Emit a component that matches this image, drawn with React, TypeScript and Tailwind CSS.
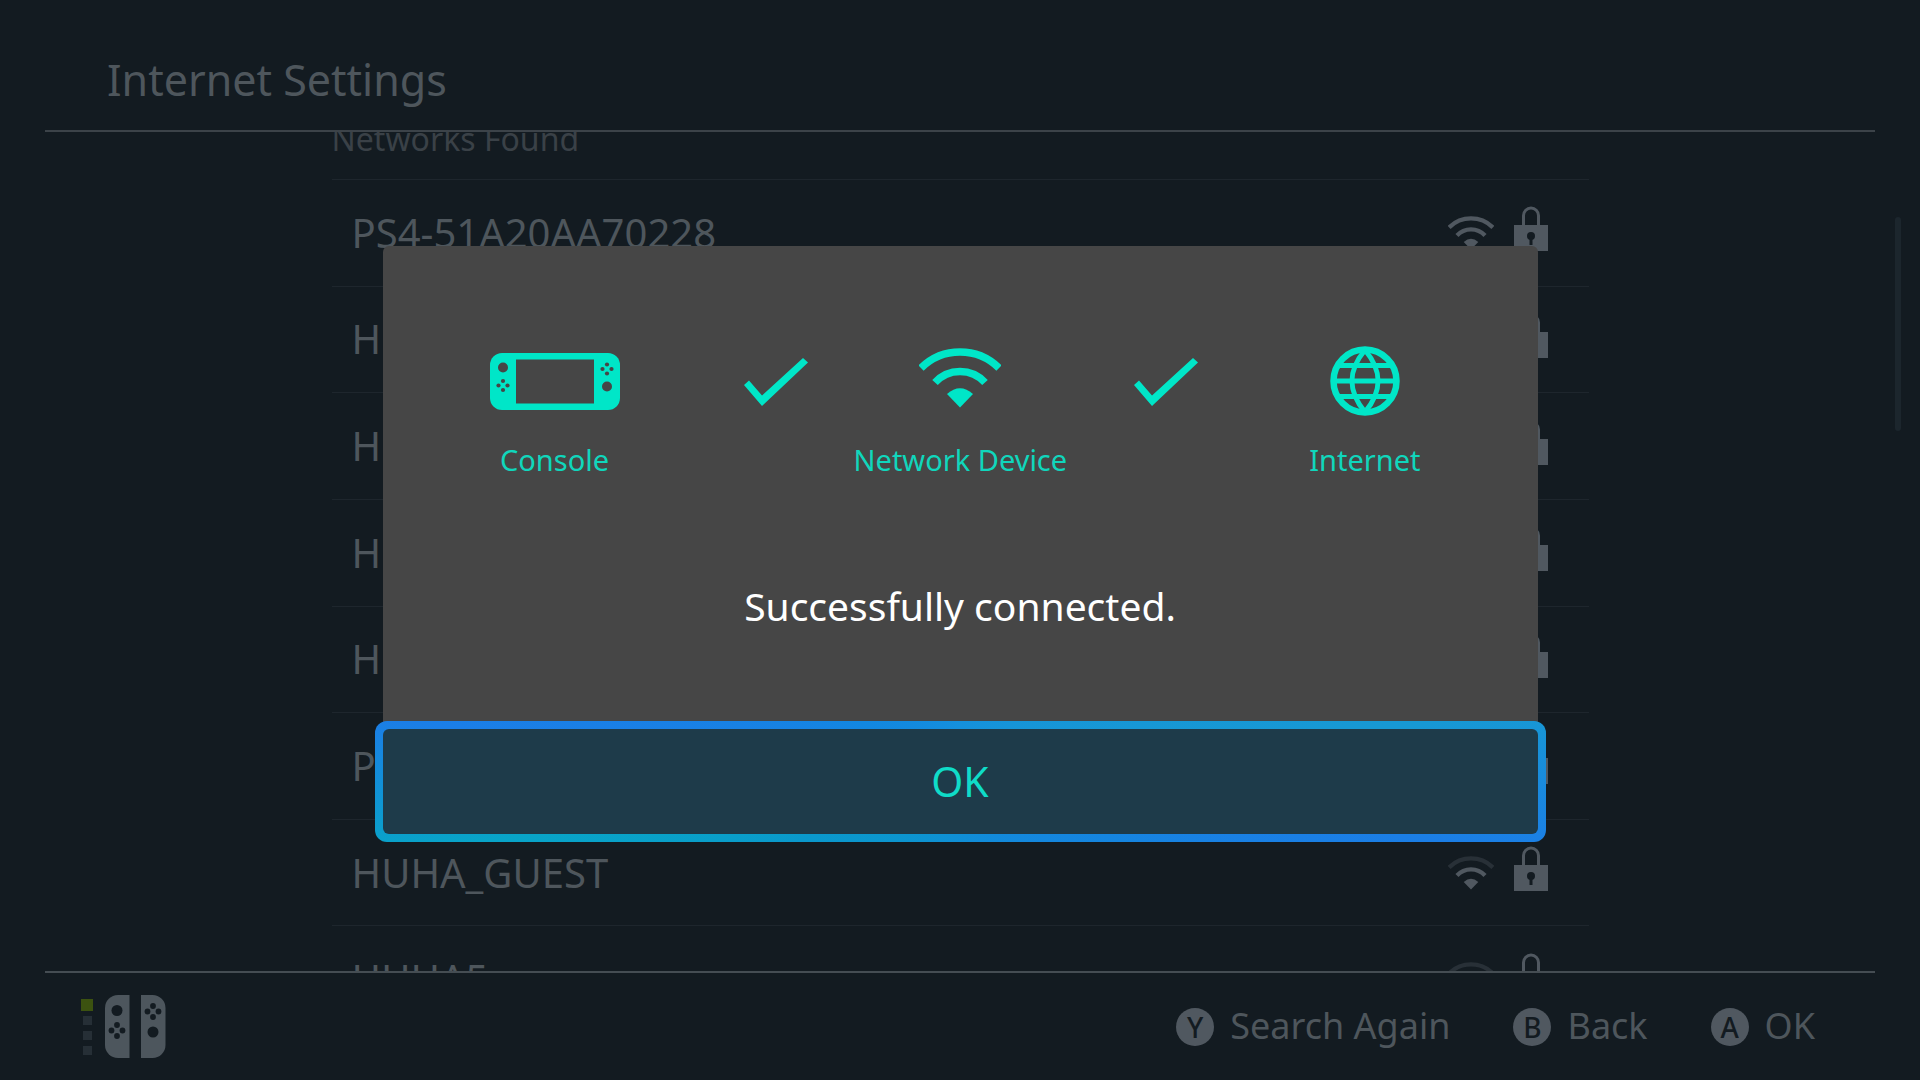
type Network = { id: number; name: string; strong: boolean };

const networks: Network[] = [
  { id: 1, name: "PS4-51A20AA70228", strong: true },
  { id: 2, name: "HUHA", strong: true },
  { id: 3, name: "HUHA", strong: true },
  { id: 4, name: "HUHA", strong: true },
  { id: 5, name: "HUHA", strong: true },
  { id: 6, name: "PS4", strong: true },
  { id: 7, name: "HUHA_GUEST", strong: false },
  { id: 8, name: "HUHA5", strong: false },
];

function Wifi({ className, weak = false }: { className: string; weak?: boolean }) {
  return (
    <svg viewBox="0 0 82 64" className={className} fill="none" stroke="currentColor" strokeWidth="7.500" aria-hidden="true">
      <path d="M2 22A55.5 55.5 0 0 1 80 22" opacity={weak ? 0.35 : 1} />
      <path d="M16 36.500A33.8 33.8 0 0 1 66 36.500" />
      <path d="M28 48Q41 36.5 54 48L41 61.5Z" fill="currentColor" stroke="none" />
    </svg>
  );
}

function Lock() {
  return (
    <svg viewBox="0 0 34 45" className="h-[45px] w-[34px]" aria-hidden="true">
      <path d="M9.500 20V9.500a7.500 7.500 0 0 1 15 0V20" fill="none" stroke="currentColor" strokeWidth="3" />
      <rect y="19" width="34" height="26" fill="currentColor" />
      <circle cx="17" cy="30" r="4" fill="#131b21" />
      <rect x="15.500" y="30" width="3" height="9" fill="#131b21" />
    </svg>
  );
}

function Dots({ cx, cy, d, r, color }: { cx: number; cy: number; d: number; r: number; color: string }) {
  return (
    <g fill={color}>
      <circle cx={cx} cy={cy - d} r={r} />
      <circle cx={cx} cy={cy + d} r={r} />
      <circle cx={cx - d} cy={cy} r={r} />
      <circle cx={cx + d} cy={cy} r={r} />
    </g>
  );
}

function ConsoleIcon() {
  return (
    <svg viewBox="0 0 130 57" className="h-[57px] w-[130px]" aria-hidden="true">
      <rect width="130" height="57" rx="12" fill="currentColor" />
      <rect x="26" y="6.5" width="78" height="44" fill="#464646" />
      <circle cx="13" cy="14.500" r="5" fill="#464646" />
      <Dots cx={13} cy={32.5} d={4.5} r={2.1} color="#464646" />
      <Dots cx={117} cy={16} d={4.5} r={2.1} color="#464646" />
      <circle cx="117" cy="33.5" r="5" fill="#464646" />
    </svg>
  );
}

function Check() {
  return (
    <svg viewBox="0 0 64 48" className="mt-0.5 h-12 w-16" aria-hidden="true">
      <path d="M0 27L5 22.500L18 37.500L59 0L64 4.500L18 48Z" fill="currentColor" />
    </svg>
  );
}

function Globe() {
  return (
    <svg viewBox="0 0 70 70" className="size-[70px]" fill="none" stroke="currentColor" strokeWidth="5" aria-hidden="true">
      <circle cx="35" cy="35" r="31.5" strokeWidth="6.500" />
      <path d="M8 19.500H62M4 35H66M8 50.500H62" />
      <path d="M35 4C17.500 25 17.500 45 35 66M35 4C52.500 25 52.500 45 35 66" />
    </svg>
  );
}

function Controllers() {
  return (
    <svg viewBox="0 0 61 63" className="h-[63px] w-[61px]" aria-hidden="true">
      <path d="M24.500 0V63H13A13 13 0 0 1 0 50V13A13 13 0 0 1 13 0Z" fill="currentColor" />
      <path d="M36 0V63H47.500A13 13 0 0 0 60.500 50V13A13 13 0 0 0 47.500 0Z" fill="currentColor" />
      <circle cx="12" cy="15.500" r="5.500" fill="#131b21" />
      <Dots cx={12} cy={35.5} d={5.5} r={2.9} color="#131b21" />
      <Dots cx={48} cy={16.5} d={5.5} r={2.9} color="#131b21" />
      <circle cx="48" cy="37" r="5.500" fill="#131b21" />
    </svg>
  );
}

function Hint({ letter, label }: { letter: string; label: string }) {
  return (
    <button type="button" className="flex items-center gap-4">
      <span className="flex size-[38px] items-center justify-center rounded-full bg-[#505860] text-[28px] leading-none font-medium text-[#131b21]">
        {letter}
      </span>
      <span className="pb-0.5 text-[36px] leading-none">{label}</span>
    </button>
  );
}

export default function App() {
  return (
    <div
      className="relative flex h-screen flex-col overflow-hidden bg-[#131b21] text-[#4e565c]"
      style={{ fontFamily: '"Noto Sans", sans-serif' }}
    >
      <header className="mx-[45px] border-b-2 border-[#3c4349] px-[62px] pt-12 pb-[18px]">
        <h1 className="text-[43px] leading-[64px]">Internet Settings</h1>
      </header>

      <main className="relative min-h-0 flex-1 overflow-hidden">
        <div className="mx-auto -mt-[13px] w-full max-w-[1257px]">
          <h2 className="pb-5 text-[32px] leading-10 text-[#3a4147]">Networks Found</h2>
          <ul className="grid h-[853px] grid-rows-8">
            {networks.map((n) => (
              <li key={n.id} className="flex items-center justify-between border-t border-[#1e262d] pr-[41px] pl-5">
                <span className="text-[40px] leading-none">{n.name}</span>
                <span className="flex items-center gap-5 pb-2 text-[#505860]">
                  <Wifi className="mt-2 h-9 w-[46px]" weak={!n.strong} />
                  <Lock />
                </span>
              </li>
            ))}
          </ul>
        </div>
        <div className="absolute top-[85px] right-[19px] h-[214px] w-1.5 rounded-full bg-[#1c262d]" />
      </main>

      <footer className="mx-[45px] flex h-[109px] items-center justify-between border-t-2 border-[#454d53] pr-[60px] pl-9">
        <div className="flex items-center gap-3 text-[#4d565d]">
          <div className="flex flex-col items-center gap-[5px]">
            <span className="size-3 bg-[#3c5210]" />
            <span className="size-[9px] bg-[#262f36]" />
            <span className="my-px size-[9px] bg-[#262f36]" />
            <span className="size-[9px] bg-[#262f36]" />
          </div>
          <Controllers />
        </div>
        <div className="flex items-center gap-[63px]">
          <Hint letter="Y" label="Search Again" />
          <Hint letter="B" label="Back" />
          <Hint letter="A" label="OK" />
        </div>
      </footer>

      <div className="absolute inset-0 flex items-center justify-center">
        <div role="dialog" aria-modal="true" aria-label="Connection result" className="w-full max-w-[1155px] rounded-t-md bg-[#464646] pt-[100px]">
          <div className="flex pl-[107px] text-[29px] leading-8 text-[#00e6c8]">
            <div className="flex flex-col items-center gap-7">
              <div className="flex h-[70px] items-center">
                <ConsoleIcon />
              </div>
              <span className="text-[#10d6bc]">Console</span>
            </div>
            <div className="mr-[46px] ml-[124px] flex h-[70px] items-center">
              <Check />
            </div>
            <div className="flex flex-col items-center gap-7">
              <div className="flex h-[70px] items-start">
                <Wifi className="h-16 w-[82px]" />
              </div>
              <span className="text-[#10d6bc]">Network Device</span>
            </div>
            <div className="mr-[111px] ml-[67px] flex h-[70px] items-center">
              <Check />
            </div>
            <div className="flex flex-col items-center gap-7">
              <Globe />
              <span className="text-[#10d6bc]">Internet</span>
            </div>
          </div>
          <p className="mt-[106px] mb-[99px] text-center text-[39px] leading-[48px] text-white">
            Successfully connected.
          </p>
          <div className="-mx-2 -mt-2 -mb-2 rounded-xl bg-[conic-gradient(#1590dc_0deg,#1798d4_83deg,#1b7ee6_97deg,#1585e0_110deg,#0a98cc_250deg,#08a4c8_263deg,#1b7ee6_276deg,#1287e0_300deg,#1590dc_360deg)] p-2">
            <button type="button" className="h-[105px] w-full rounded-md bg-[#1e3b4a] text-[41px] leading-none text-[#0fdcc8]">
              OK
            </button>
          </div>
        </div>
      </div>
    </div>
  );
}
